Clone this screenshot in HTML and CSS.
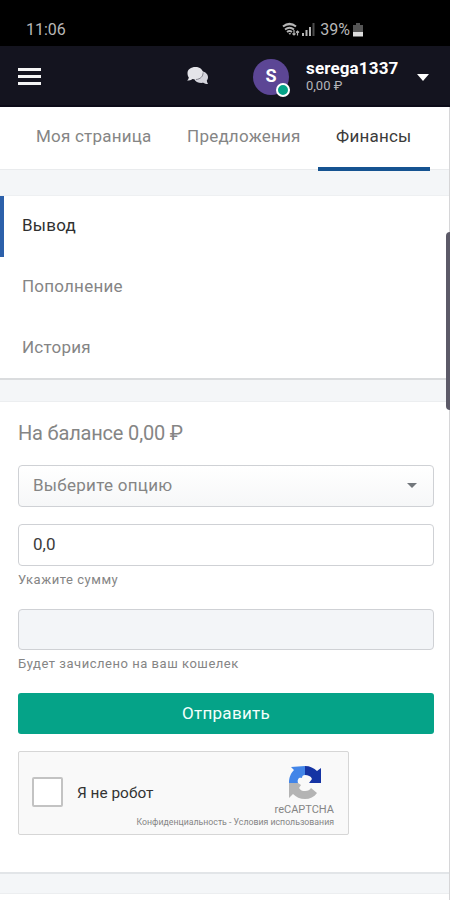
FILE: index.html
```html
<!DOCTYPE html>
<html lang="ru">
<head>
  <meta charset="utf-8">
  <title>Финансы</title>
  <link rel="stylesheet" href="styles.css">
</head>
<body>
  <div class="status-bar">
    <span class="time">11:06</span>
    <div class="status-icons">
      <svg class="wifi" width="18" height="16" viewBox="0 0 18 16" fill="none" stroke="#b5b5b5">
        <path d="M1 4.500Q7.500 -.5 14 4.500" stroke-width="2.200"/>
        <path d="M3 7.500Q7.500 4 12 7.500M5 10Q7.500 8 10 10" stroke-width="1.800"/>
        <path d="M6.500 11h2.500l-1 2z" fill="#b5b5b5" stroke="none"/>
        <path d="M12 8v5m-1.500-1.500L12 13l1.500-1.500M15.500 13.500V9m-1.500 1.500L15.500 9l1.500 1.500" stroke-width="1.200"/>
      </svg>
      <svg class="signal" width="13" height="13" viewBox="0 0 13 13" fill="#b5b5b5">
        <path d="M0 10h2v3H0zM3.500 7h2v6h-2zM7 4h2v9H7z"/>
        <path d="M10.500 0h2v13h-2z" fill="#4c4c4c"/>
      </svg>
      <span class="percent">39%</span>
      <svg class="battery" width="10" height="14" viewBox="0 0 10 14">
        <path d="M3 0h4v2h3v7H0V2h3z" fill="#555"/>
        <path d="M0 9h10v4.500H0z" fill="#ddd"/>
      </svg>
    </div>
  </div>

  <header class="navbar">
    <button class="burger"><span></span><span></span><span></span></button>
    <svg class="chat" width="22" height="18" viewBox="0 0 22 18">
      <path d="M14 4c4 .5 7 3 7 6 0 1.500-.4 2.700-1.200 3.600.1 1.300.5 2.500 1.200 3.400-2 0-3.600-.4-4.700-1.200-4 .6-8-.8-9-3.800z" fill="#d4d4dc"/>
      <path d="M8.500 0C13 0 16 2.700 16 6s-3 6.300-7.500 6.300c-1.100 0-2.100-.1-3-.4C4.200 13 2.300 13.500 0 13.500c1-.9 1.700-2 1.800-3.100C.9 9.300.5 7.700.5 6c0-3.500 3.500-6 8-6z" fill="#e4e4e9"/>
      <path d="M16 5.500c.3 3.700-2.500 6.600-7 7" fill="none" stroke="#6f6f79" stroke-width=".8"/>
    </svg>
    <div class="avatar">S<span class="online"></span></div>
    <div class="user">
      <div class="user-name">serega1337</div>
      <div class="user-balance">0,00 ₽</div>
    </div>
    <span class="caret"></span>
  </header>

  <nav class="tabs">
    <a class="tab">Моя страница</a>
    <a class="tab">Предложения</a>
    <a class="tab active">Финансы</a>
  </nav>

  <div class="menu">
    <a class="menu-item active">Вывод</a>
    <a class="menu-item">Пополнение</a>
    <a class="menu-item">История</a>
  </div>

  <form class="card">
    <h1>На балансе 0,00 ₽</h1>
    <div class="field select"><span>Выберите опцию</span><span class="arrow"></span></div>
    <div class="field amount">0,0</div>
    <div class="hint">Укажите сумму</div>
    <div class="field disabled"></div>
    <div class="hint">Будет зачислено на ваш кошелек</div>
    <button class="submit" type="button">Отправить</button>
    <div class="captcha">
      <span class="checkbox"></span>
      <span class="captcha-label">Я не робот</span>
      <div class="captcha-brand">
        <svg class="captcha-logo" width="34" height="34" viewBox="0 0 34 34">
          <path d="M17 0v9c-2 0-3 1-3 3-3-1-5 1-4 5H1C1 11 3 7 6 4L3 1z" fill="#4285e8"/>
          <path d="M17 0c5 0 9 2 12 5l4-3v15H21l3-4c-1-3-4-4-7-4z" fill="#1534a4"/>
          <path d="M1 17h9l3 2-2 3c2 3 4 3 6 3 3 0 5-1 6-3l6 5c-3 4-7 6-12 6s-9-2-12-5l-4 4z" fill="#b4b4b4"/>
        </svg>
        <div class="captcha-name">reCAPTCHA</div>
        <div class="captcha-links">Конфиденциальность - Условия использования</div>
      </div>
    </div>
  </form>
  <div class="next-card"></div>
  <div class="scroll-track"><div class="scroll-thumb"></div></div>
</body>
</html>
```

FILE: styles.css
```css
* {
  box-sizing: border-box;
}
body {
  position: relative;
  margin: 0;
  width: 450px;
  height: 900px;
  overflow: hidden;
  background: #f4f6f8;
  color: #858585;
  font-family: Roboto, "Liberation Sans", sans-serif;
  font-size: 17px;
}
button {
  border: none;
  padding: 0;
  font-family: inherit;
}
.status-bar {
  display: flex;
  align-items: center;
  height: 46px;
  padding: 13px 87px 0 26px;
  background: #000;
  color: #b8b8b8;
  font-size: 16px;
}
.status-icons {
  display: flex;
  align-items: center;
  margin-left: auto;
}
.signal {
  margin-left: 2px;
}
.percent {
  margin: 0 3px 0 5px;
}
.navbar {
  display: flex;
  align-items: center;
  height: 61px;
  padding: 0 21px 0 18px;
  background: #14141f;
  border-bottom: 2px solid #0c0b18;
}
.burger {
  display: flex;
  flex-direction: column;
  gap: 4px;
  width: 23px;
  margin-top: 2px;
  background: none;
}
.burger span {
  height: 3px;
  background: #f5f5f5;
}
.chat {
  margin-left: 146px;
}
.avatar {
  position: relative;
  width: 36px;
  height: 36px;
  margin: 3px 0 0 44px;
  border-radius: 50%;
  background: #5c4695;
  color: #fff;
  font-size: 18px;
  font-weight: 700;
  line-height: 34px;
  text-align: center;
}
.online {
  position: absolute;
  right: -1px;
  bottom: -2px;
  width: 14px;
  height: 14px;
  border: 2px solid #fff;
  border-radius: 50%;
  background: #05a388;
}
.user {
  margin: 2px 0 0 17px;
}
.user-name {
  color: #fff;
  font-size: 17px;
  font-weight: 700;
  letter-spacing: .15px;
  line-height: 19px;
}
.user-balance {
  color: #b4b4ba;
  font-size: 13px;
  line-height: 16px;
}
.caret {
  margin: 3px 0 0 auto;
  border: 6px solid transparent;
  border-top: 7px solid #fff;
  border-bottom: none;
}
.tabs {
  display: flex;
  height: 63px;
  padding-left: 18px;
  background: #fff;
  border-bottom: 1px solid #e9ebed;
}
.tab {
  height: 64px;
  padding: 0 17.5px 0 18px;
  letter-spacing: .22px;
  line-height: 59px;
  white-space: nowrap;
}
.tab.active {
  width: 112px;
  border-bottom: 4px solid #155391;
  color: #3b3b3b;
}
.menu {
  height: 185px;
  margin-top: 25px;
  background: #fff;
  border-top: 1px solid #eef0f2;
  border-bottom: 2px solid #dadcde;
}
.menu-item {
  display: block;
  height: 61px;
  padding-left: 22px;
  letter-spacing: .22px;
  line-height: 59px;
}
.menu-item.active {
  padding-left: 18px;
  border-left: 4px solid #2c60aa;
  color: #303030;
}
.card {
  height: 473px;
  margin-top: 21px;
  padding: 18px 16px 0 18px;
  background: #fff;
  border-top: 1px solid #eceef0;
  border-bottom: 2px solid #e2e5e8;
}
h1 {
  margin: 0 0 19px;
  font-size: 20px;
  font-weight: 400;
  letter-spacing: -.18px;
  line-height: 26px;
}
.field {
  display: flex;
  align-items: center;
  height: 42px;
  padding: 0 16px 2px 14px;
  border: 1px solid #cfd1d5;
  border-radius: 4px;
}
.select {
  margin-bottom: 17px;
  background: linear-gradient(#fff, #f6f7f8);
  letter-spacing: .27px;
}
.arrow {
  margin-left: auto;
  border: 5px solid transparent;
  border-top-color: #72777c;
  border-bottom: none;
}
.amount {
  color: #3c3c3c;
}
.disabled {
  height: 41px;
  background: #f3f5f8;
}
.hint {
  margin: 6px 0 21px;
  font-size: 13px;
  letter-spacing: .53px;
  line-height: 16px;
}
.submit {
  display: block;
  width: 100%;
  height: 41px;
  padding-bottom: 2px;
  border-radius: 3px;
  background: #05a388;
  color: #f4fffc;
  font-size: 17px;
  letter-spacing: .3px;
}
.captcha {
  display: flex;
  align-items: center;
  width: 331px;
  height: 84px;
  margin-top: 17px;
  padding: 0 14px 2px 13px;
  background: #f9f9f9;
  border: 1px solid #d6d6d6;
  border-radius: 2px;
}
.checkbox {
  flex: none;
  width: 31px;
  height: 30px;
  background: #fff;
  border: 2px solid #c3c3c3;
  border-radius: 2px;
}
.captcha-label {
  width: 76px;
  margin: 2px 0 0 14px;
  color: #333;
  font-size: 15.4px;
  white-space: nowrap;
}
.captcha-brand {
  display: flex;
  flex: 1;
  flex-direction: column;
  align-items: flex-end;
  min-width: 0;
  margin-top: 7px;
}
.captcha-logo {
  margin: 2px 12px 0 0;
}
.captcha-name {
  margin-top: 3px;
  font-size: 11px;
  line-height: 13px;
}
.captcha-links {
  font-size: 8.75px;
  line-height: 12px;
  white-space: nowrap;
}
.next-card {
  height: 10px;
  margin-top: 19px;
  background: #fff;
  border-top: 1px solid #eceef0;
}
/* scrollbar over the right edge */
.scroll-track {
  position: absolute;
  top: 107px;
  right: 0;
  bottom: 0;
  width: 1px;
  background: #d6d6d8;
}
.scroll-thumb {
  position: absolute;
  top: 125px;
  right: 0;
  width: 4px;
  height: 178px;
  border-radius: 4px 0 0 4px;
  background: #5c5a68;
}
```
